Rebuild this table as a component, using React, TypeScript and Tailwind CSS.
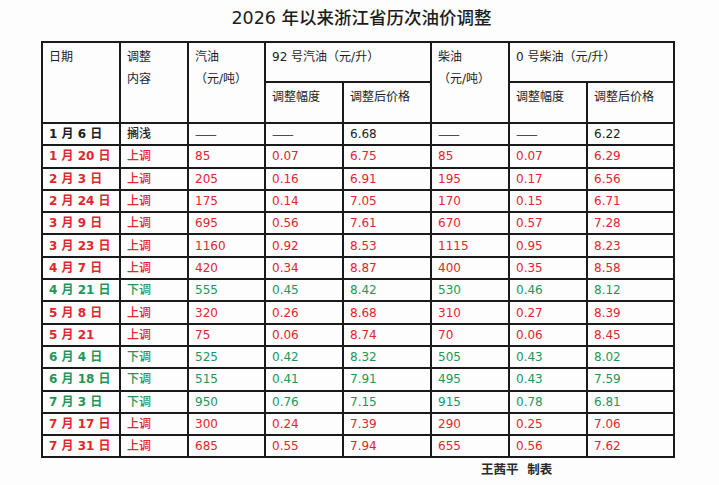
const rows = [
  { date: "1 月 6 日", kind: "搁浅", a: "——", b: "——", c: "6.68", d: "——", e: "——", f: "6.22", tone: "black" },
  { date: "1 月 20 日", kind: "上调", a: "85", b: "0.07", c: "6.75", d: "85", e: "0.07", f: "6.29", tone: "red" },
  { date: "2 月 3 日", kind: "上调", a: "205", b: "0.16", c: "6.91", d: "195", e: "0.17", f: "6.56", tone: "red" },
  { date: "2 月 24 日", kind: "上调", a: "175", b: "0.14", c: "7.05", d: "170", e: "0.15", f: "6.71", tone: "red" },
  { date: "3 月 9 日", kind: "上调", a: "695", b: "0.56", c: "7.61", d: "670", e: "0.57", f: "7.28", tone: "red" },
  { date: "3 月 23 日", kind: "上调", a: "1160", b: "0.92", c: "8.53", d: "1115", e: "0.95", f: "8.23", tone: "red" },
  { date: "4 月 7 日", kind: "上调", a: "420", b: "0.34", c: "8.87", d: "400", e: "0.35", f: "8.58", tone: "red" },
  { date: "4 月 21 日", kind: "下调", a: "555", b: "0.45", c: "8.42", d: "530", e: "0.46", f: "8.12", tone: "green" },
  { date: "5 月 8 日", kind: "上调", a: "320", b: "0.26", c: "8.68", d: "310", e: "0.27", f: "8.39", tone: "red" },
  { date: "5 月 21", kind: "上调", a: "75", b: "0.06", c: "8.74", d: "70", e: "0.06", f: "8.45", tone: "red" },
  { date: "6 月 4 日", kind: "下调", a: "525", b: "0.42", c: "8.32", d: "505", e: "0.43", f: "8.02", tone: "green" },
  { date: "6 月 18 日", kind: "下调", a: "515", b: "0.41", c: "7.91", d: "495", e: "0.43", f: "7.59", tone: "green" },
  { date: "7 月 3 日", kind: "下调", a: "950", b: "0.76", c: "7.15", d: "915", e: "0.78", f: "6.81", tone: "green" },
  { date: "7 月 17 日", kind: "上调", a: "300", b: "0.24", c: "7.39", d: "290", e: "0.25", f: "7.06", tone: "red" },
  { date: "7 月 31 日", kind: "上调", a: "685", b: "0.55", c: "7.94", d: "655", e: "0.56", f: "7.62", tone: "red" },
]

const toneClass: Record<string, string> = {
  black: "text-[#1c1c1c]",
  red: "text-[#e2262c]",
  green: "text-[#1f9659]",
}

const cell = "border-2 border-[#1a1a1a] px-[6px] align-middle"
const head = "border-2 border-[#1a1a1a] px-[6px] pt-[3px] align-top leading-[22px] text-left font-normal"

// empty cells hold a long dash; the CJK font joins the two dashes into one line
function Val({ v }: { v: string }) {
  if (v === "——") {
    return <span className="font-['Noto_Sans_CJK_SC'] text-[13px] tracking-[-0.5px]">——</span>
  }
  return <>{v}</>
}

export default function App() {
  return (
    <div
      className="w-[719px] h-[485px] bg-[#fdfdfd] text-[#1c1c1c]"
      style={{ fontFamily: '"DejaVu Sans", "Noto Sans CJK SC", sans-serif' }}
    >
      {/* Title */}
      <div className="h-[41px] pt-[6px] pl-[4px] text-center text-[17.5px] leading-[24px] font-medium">
        2026 年以来浙江省历次油价调整
      </div>

      {/* Table */}
      <div className="pl-[41px]">
        <table className="table-fixed border-collapse text-[12px] w-[632px]">
          <colgroup>
            <col className="w-[78px]" />
            <col className="w-[68px]" />
            <col className="w-[77px]" />
            <col className="w-[78px]" />
            <col className="w-[88px]" />
            <col className="w-[78px]" />
            <col className="w-[78px]" />
            <col className="w-[87px]" />
          </colgroup>
          <thead>
            <tr className="h-[40px]">
              <th rowSpan={2} className={head}>日期</th>
              <th rowSpan={2} className={head}>
                调整
                <br />
                内容
              </th>
              <th rowSpan={2} className={head}>
                汽油
                <br />
                （元/吨）
              </th>
              <th colSpan={2} className={head}>92 号汽油（元/升）</th>
              <th rowSpan={2} className={head}>
                柴油
                <br />
                （元/吨）
              </th>
              <th colSpan={2} className={head}>0 号柴油（元/升）</th>
            </tr>
            <tr className="h-[41px]">
              <th className={head}>调整幅度</th>
              <th className={head}>调整后价格</th>
              <th className={head}>调整幅度</th>
              <th className={head}>调整后价格</th>
            </tr>
          </thead>
          <tbody>
            {rows.map((r) => (
              <tr key={r.date} className={`h-[22.3px] ${toneClass[r.tone]}`}>
                <td className={`${cell} font-bold`}>{r.date}</td>
                <td className={`${cell} font-medium`}>{r.kind}</td>
                <td className={cell}><Val v={r.a} /></td>
                <td className={cell}><Val v={r.b} /></td>
                <td className={cell}>{r.c}</td>
                <td className={cell}><Val v={r.d} /></td>
                <td className={cell}><Val v={r.e} /></td>
                <td className={cell}>{r.f}</td>
              </tr>
            ))}
          </tbody>
        </table>
      </div>

      {/* Footer */}
      <div className="pl-[481px] pt-[3px] text-[12.5px] font-bold text-[#2a2a2a]">
        王茜平&nbsp;&nbsp;制表
      </div>
    </div>
  )
}
